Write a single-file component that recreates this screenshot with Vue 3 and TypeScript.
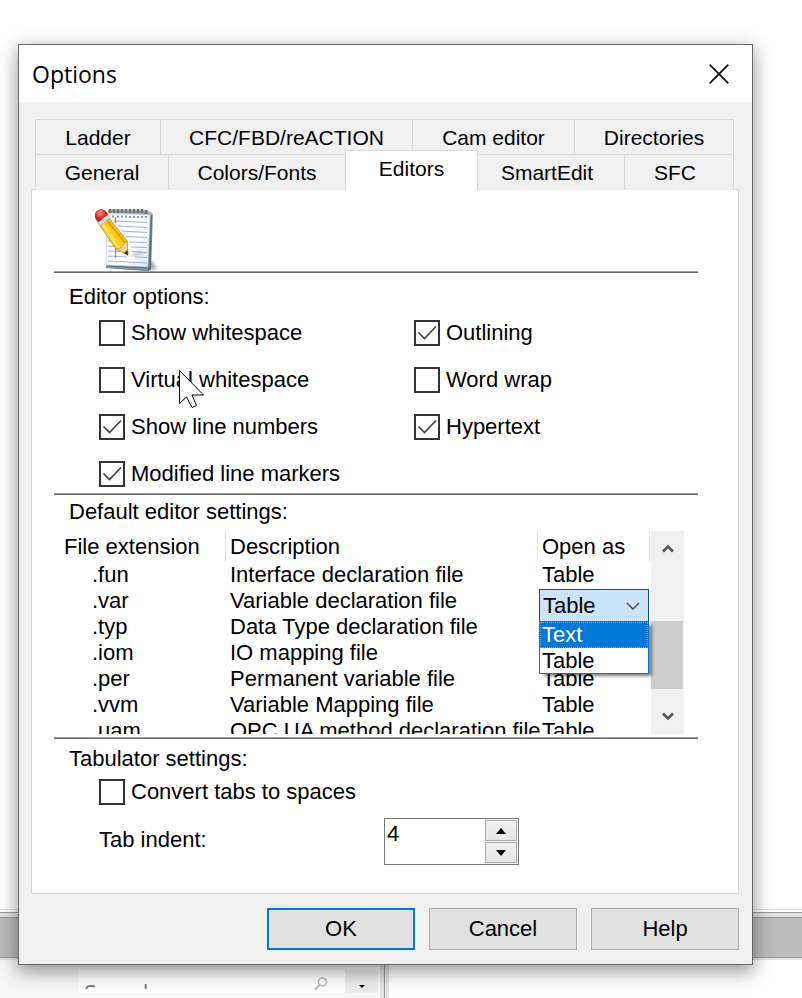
<script setup lang="ts">
import { ref } from 'vue'

interface Option {
  id: string
  label: string
  checked: boolean
}

interface FileType {
  ext: string
  description: string
  openAs: string
}

const upperTabs = ['Ladder', 'CFC/FBD/reACTION', 'Cam editor', 'Directories']
const lowerTabs = ['General', 'Colors/Fonts', 'Editors', 'SmartEdit', 'SFC']
const activeTab = ref('Editors')

const leftOptions = ref<Option[]>([
  { id: 'show-whitespace', label: 'Show whitespace', checked: false },
  { id: 'virtual-whitespace', label: 'Virtual whitespace', checked: false },
  { id: 'line-numbers', label: 'Show line numbers', checked: true },
  { id: 'line-markers', label: 'Modified line markers', checked: true },
])
const rightOptions = ref<Option[]>([
  { id: 'outlining', label: 'Outlining', checked: true },
  { id: 'word-wrap', label: 'Word wrap', checked: false },
  { id: 'hypertext', label: 'Hypertext', checked: true },
])

const fileTypes = ref<FileType[]>([
  { ext: '.fun', description: 'Interface declaration file', openAs: 'Table' },
  { ext: '.var', description: 'Variable declaration file', openAs: 'Table' },
  { ext: '.typ', description: 'Data Type declaration file', openAs: 'Table' },
  { ext: '.iom', description: 'IO mapping file', openAs: 'Table' },
  { ext: '.per', description: 'Permanent variable file', openAs: 'Table' },
  { ext: '.vvm', description: 'Variable Mapping file', openAs: 'Table' },
  { ext: '.uam', description: 'OPC UA method declaration file', openAs: 'Table' },
])
const editing = ref('.var')
const choices = ['Text', 'Table']
const highlighted = ref('Text')

const convertTabs = ref(false)
const tabIndent = ref(4)
</script>

<template>
  <div class="desktop">
    <div class="backdrop">
      <div class="bar"></div>
      <div class="lower">
        <div class="search-pane">
          <div class="search">
            <div class="search-clip">
              <input class="search-input" type="text" placeholder="Search" aria-label="Search" />
            </div>
            <svg class="magnifier" viewBox="0 0 14 14" width="14" height="14">
              <circle cx="8.500" cy="5" r="4" fill="none" stroke="#b4b4b4" stroke-width="1.500" />
              <path d="M5.500 8 1 12.500" stroke="#b4b4b4" stroke-width="2" />
            </svg>
          </div>
          <button class="search-drop" type="button" aria-label="Search options">
            <svg viewBox="0 0 6 3" width="6" height="3"><path d="M0 0H6L3 3Z" /></svg>
          </button>
        </div>
        <div class="splitter"></div>
      </div>
    </div>

    <section class="dialog" role="dialog" aria-labelledby="dialog-title">
      <header class="titlebar">
        <h1 id="dialog-title">Options</h1>
        <button class="close" type="button" aria-label="Close">
          <svg viewBox="0 0 20 20" width="20" height="20">
            <path d="M.7.700 19.300 19.300M19.300.7.700 19.300" stroke="#111" stroke-width="1.800" />
          </svg>
        </button>
      </header>

      <div class="body">
        <div class="tabs" role="tablist">
          <div class="tab-row upper">
            <button v-for="tab in upperTabs" :key="tab" class="tab" type="button" role="tab">{{ tab }}</button>
          </div>
          <div class="tab-row lower-row">
            <button
              v-for="tab in lowerTabs"
              :key="tab"
              class="tab"
              :class="{ active: tab === activeTab }"
              type="button"
              role="tab"
              :aria-selected="tab === activeTab"
            >{{ tab }}</button>
          </div>
        </div>

        <div class="panel" role="tabpanel">
          <svg class="notepad" viewBox="0 0 66 64" width="66" height="64">
            <defs>
              <linearGradient id="paper" x1="0" y1="0" x2="1" y2="1">
                <stop offset="0" stop-color="#eef4fc" />
                <stop offset=".6" stop-color="#ffffff" />
                <stop offset="1" stop-color="#dde6f2" />
              </linearGradient>
              <linearGradient id="cover" x1="0" y1="0" x2="0" y2="1">
                <stop offset="0" stop-color="#a9b4bd" />
                <stop offset="1" stop-color="#566b7c" />
              </linearGradient>
              <linearGradient id="wood" x1="0" y1="1" x2="1" y2="0">
                <stop offset="0" stop-color="#e59a00" />
                <stop offset=".45" stop-color="#ffd21e" />
                <stop offset="1" stop-color="#f0a800" />
              </linearGradient>
              <radialGradient id="rubber" cx=".4" cy=".3" r=".8">
                <stop offset="0" stop-color="#ff8a78" />
                <stop offset=".5" stop-color="#d92a20" />
                <stop offset="1" stop-color="#9c120c" />
              </radialGradient>
              <filter id="soft"><feGaussianBlur stdDeviation="1.500" /></filter>
            </defs>
            <path d="M14 60 57 63 63 61 58 54Z" fill="#777" opacity=".6" filter="url(#soft)" />
            <path d="M14 3 55 4 59 7 57 63 53 64 12 61Z" fill="url(#cover)" />
            <path d="M13 6 56 8 54 60 12 58Z" fill="url(#paper)" stroke="#b7c6d6" stroke-width=".6" />
            <path d="M57.500 8 55.500 62" stroke="#5d7080" stroke-width="1.500" />
            <path d="M12 60 54 62.500" stroke="#8397a8" stroke-width="1.500" />
            <path d="M20 14 53 15.500M24 19 53 20.500M28 24 53 25.500M32 29.500 53 30.500M14 29 16 29M14 34 19 34.500M35 35 53 35.500M14 39 22 39.500M37 40 53 40.500M14 44 26 44.500M38 44.500 53 45.500M14 49 33 50M41 50 53 50.500M14 54 53 56" stroke="#a3b1d6" stroke-width="1.200" />
            <path d="M21.500 10V16M21.500 38V51" stroke="#f0686c" stroke-width="1.300" />
            <path d="M16 2V6M20 2V6M24 2V6M28 2V6M32 2V6M36 2V6M40 2V6M44 2V6M48 2V6M52 3V7" stroke="#6a6e73" stroke-width="2.800" />
            <path d="M19 8.500v2M24 8.500v2M28 8.500v2M32 8.500v2M36 9v2M40 9v2M44 9v2M48 9v2M52 9v2" stroke="#777" stroke-width="1.500" />
            <path d="M35 49 45 44 51 46 43 49Z" fill="#9da6b3" opacity=".6" filter="url(#soft)" />
            <path d="M5 17 14 10 33 34 34 48 22 42Z" fill="url(#wood)" stroke="#b87800" stroke-width=".7" />
            <path d="M8 16 25 42" stroke="#ffe678" stroke-width="2" />
            <path d="M13 13 31 36" stroke="#d79a00" stroke-width="1.500" />
            <path d="M22 42 27 41 29 38 33 34 34 48Z" fill="#f0d6a0" stroke="#b98a45" stroke-width=".6" />
            <path d="M30 46 33.500 43 34 48.500Z" fill="#342c2a" />
            <path d="M3 14 13 7 16 11 6 19Z" fill="#d9dce0" stroke="#8e959b" stroke-width=".6" />
            <path d="M1 10Q0 3 7 2 12 2 14 8 10 10 5 15 2 14 1 10Z" fill="url(#rubber)" />
          </svg>

          <section class="group editor-options">
            <h2>Editor options:</h2>
            <div class="option-columns">
              <div class="option-list">
                <label v-for="o in leftOptions" :key="o.id" class="check" :for="o.id">
                  <input :id="o.id" v-model="o.checked" type="checkbox" />
                  <svg class="tick" viewBox="0 0 26 26" width="26" height="26"><path d="M4.500 12.500 10.500 18.500 22 6.500" /></svg>
                  <span>{{ o.label }}</span>
                </label>
              </div>
              <div class="option-list">
                <label v-for="o in rightOptions" :key="o.id" class="check" :for="o.id">
                  <input :id="o.id" v-model="o.checked" type="checkbox" />
                  <svg class="tick" viewBox="0 0 26 26" width="26" height="26"><path d="M4.500 12.500 10.500 18.500 22 6.500" /></svg>
                  <span>{{ o.label }}</span>
                </label>
              </div>
            </div>
          </section>

          <section class="group defaults">
            <h2>Default editor settings:</h2>
            <div class="list">
              <table>
                <colgroup>
                  <col class="col-ext" />
                  <col />
                  <col class="col-open" />
                </colgroup>
                <thead>
                  <tr>
                    <th scope="col">File extension</th>
                    <th scope="col">Description</th>
                    <th scope="col">Open as</th>
                  </tr>
                </thead>
                <tbody>
                  <tr v-for="f in fileTypes" :key="f.ext">
                    <td class="ext">{{ f.ext }}</td>
                    <td>{{ f.description }}</td>
                    <td v-if="f.ext === editing" class="open-cell">
                      <select v-model="f.openAs" aria-label="Open as">
                        <option v-for="c in choices" :key="c">{{ c }}</option>
                      </select>
                      <svg class="chevron" viewBox="0 0 14 8" width="14" height="8"><path d="M1 1 7 7 13 1" /></svg>
                      <ul class="menu" role="listbox" aria-label="Open as choices">
                        <li
                          v-for="c in choices"
                          :key="c"
                          role="option"
                          :class="{ selected: c === highlighted }"
                          :aria-selected="c === highlighted"
                        >{{ c }}</li>
                      </ul>
                    </td>
                    <td v-else>{{ f.openAs }}</td>
                  </tr>
                </tbody>
              </table>
              <div class="scrollbar">
                <button type="button" aria-label="Scroll up">
                  <svg viewBox="0 0 12 9" width="12" height="9"><path d="M1 7.500 6 2.500 11 7.500" /></svg>
                </button>
                <div class="track"><div class="thumb"></div></div>
                <button type="button" aria-label="Scroll down">
                  <svg viewBox="0 0 12 9" width="12" height="9"><path d="M1 1.500 6 6.500 11 1.500" /></svg>
                </button>
              </div>
            </div>
          </section>

          <section class="group tabulator">
            <h2>Tabulator settings:</h2>
            <label class="check" for="convert-tabs">
              <input id="convert-tabs" v-model="convertTabs" type="checkbox" />
              <svg class="tick" viewBox="0 0 26 26" width="26" height="26"><path d="M4.500 12.500 10.500 18.500 22 6.500" /></svg>
              <span>Convert tabs to spaces</span>
            </label>
            <div class="indent-row">
              <label for="tab-indent">Tab indent:</label>
              <div class="spinner">
                <input id="tab-indent" v-model="tabIndent" type="text" />
                <div class="spin-buttons">
                  <button type="button" aria-label="Increase" @click="tabIndent++">
                    <svg viewBox="0 0 10 6" width="10" height="6"><path d="M0 6 5 0 10 6Z" /></svg>
                  </button>
                  <button type="button" aria-label="Decrease" @click="tabIndent--">
                    <svg viewBox="0 0 10 6" width="10" height="6"><path d="M0 0 5 6 10 0Z" /></svg>
                  </button>
                </div>
              </div>
            </div>
          </section>
        </div>

        <footer class="actions">
          <button class="default" type="button">OK</button>
          <button type="button">Cancel</button>
          <button type="button">Help</button>
        </footer>
      </div>
    </section>

    <svg class="pointer" viewBox="0 0 26 39" width="26" height="39">
      <path d="M.5.500V33.500L7.500 27 13 37.500 17.500 35.500 13 25H24.500Z" fill="#fff" stroke="#000" />
    </svg>
  </div>
</template>

<style>
body {
  background: #fff;
}
</style>

<style scoped>
* {
  box-sizing: border-box;
}

.desktop {
  position: relative;
  min-height: 100vh;
  padding: 44px 49px 33px 18px;
  overflow: hidden;
  font: 22px/26px "Liberation Sans", Arial, sans-serif;
  color: #000;
}

button,
input,
select {
  margin: 0;
  padding: 0;
  border: 0;
  border-radius: 0;
  font: inherit;
  color: inherit;
  appearance: none;
}

svg {
  display: block;
}

/* Application window behind the dialog */
.backdrop {
  position: absolute;
  inset: auto 0 0 0;
  height: 89px;
  display: flex;
  flex-direction: column;
  border-top: 1px solid #e2e2e2;
}

.bar {
  flex: none;
  height: 46px;
  margin-top: 2px;
  border-top: 1px solid #999;
  border-bottom: 1px solid #999;
  background: linear-gradient(#e3e3e3 4px, #999 4px, #999 5px, #bcbcbc 5px);
}

.lower {
  flex: 1;
  display: flex;
  border-top: 2px solid #e3e3e3;
}

.search-pane {
  flex: none;
  width: 380px;
  display: flex;
  align-items: flex-start;
  padding: 10px 2px 0 79px;
  background: #f7f7f7;
}

.search {
  flex: 1;
  height: 23px;
  display: flex;
  background: #fff;
}

.search-clip {
  flex: 1;
  height: 19px;
  overflow: hidden;
}

.search-input {
  width: 100%;
  height: 30px;
  margin-top: 8px;
  padding-left: 5px;
  background: transparent;
  font: 23px/30px "Open Sans", "Noto Sans", sans-serif;
}

.search-input::placeholder {
  color: #777;
  opacity: 1;
}

.magnifier {
  margin: 7px 17px 0 0;
}

.search-drop {
  width: 33px;
  height: 23px;
  display: flex;
  justify-content: center;
  padding-top: 15px;
  background: #ececec;
}

.splitter {
  width: 9px;
  border-right: 4px solid #e3e3e3;
  background: linear-gradient(90deg, #e3e3e3 4px, #999 4px);
}

/* Dialog frame */
.dialog {
  position: relative;
  border: 1px solid #666;
  background: #f0f0f0;
  box-shadow: 0 6px 18px 1px rgba(0, 0, 0, 0.4);
}

.titlebar {
  display: flex;
  align-items: center;
  justify-content: space-between;
  height: 57px;
  padding: 0 23px 0 13px;
  background: #fff;
}

h1 {
  margin: 0;
  font: 23px/30px "Open Sans", "Noto Sans", sans-serif;
}

.close {
  background: transparent;
}

.body {
  padding: 17px 13px 14px 12px;
}

/* Tabs */
.tabs {
  padding: 0 5px 0 4px;
}

.tab-row {
  display: grid;
  height: 35px;
}

.upper {
  grid-template-columns: 125fr 252fr 162fr 160fr;
}

.lower-row {
  grid-template-columns: 133fr 177fr 133fr 146fr 110fr;
}

.tab {
  padding-top: 1px;
  border: 1px solid #d9d9d9;
  border-width: 1px 0 0 1px;
  background: #f0f0f0;
  font-size: 21px;
  white-space: nowrap;
}

.tab:last-child {
  border-right-width: 1px;
}

.tab.active {
  position: relative;
  height: 40px;
  margin-top: -4px;
  padding-bottom: 4px;
  border-right-width: 1px;
  background: #fff;
}

.tab.active ~ .tab {
  padding-right: 8px;
}

.tab.active + .tab {
  border-left-width: 0;
}

/* Tab page */
.panel {
  padding: 17px 40px 28px 22px;
  border: 1px solid #d9d9d9;
  background: #fff;
}

.notepad {
  margin-left: 40px;
}

.group {
  border-top: 1px solid #a0a0a0;
  box-shadow: inset 0 1px #696969;
}

h2 {
  margin: 0;
  padding-left: 15px;
  font: inherit;
}

.editor-options {
  padding: 12px 0 6px;
}

.option-columns {
  display: grid;
  grid-template-columns: 315fr 284fr;
  padding: 10px 0 0 45px;
}

.option-list {
  display: flex;
  flex-direction: column;
  gap: 21px;
}

.check {
  position: relative;
  display: flex;
  align-items: center;
  gap: 6px;
  height: 26px;
}

.check input {
  width: 26px;
  height: 26px;
  border: 2px solid #333;
  background: #fff;
}

.tick {
  position: absolute;
  left: 0;
  top: 0;
  visibility: hidden;
  pointer-events: none;
}

.tick path {
  fill: none;
  stroke: #444;
  stroke-width: 1.7;
}

.check input:checked + .tick {
  visibility: visible;
}

.defaults {
  padding: 5px 0 3px;
}

.list {
  display: grid;
  grid-template-columns: minmax(0, 1fr) 33px;
  align-items: start;
  gap: 1px;
  height: 203px;
  margin: 6px 14px 0 5px;
  overflow: hidden;
}

table {
  width: 100%;
  table-layout: fixed;
  border-collapse: separate;
  border-spacing: 0;
}

.col-ext {
  width: 167px;
}

.col-open {
  width: 112px;
}

th {
  height: 31px;
  padding: 0 0 0 4px;
  border-right: 1px solid #e5e5e5;
  font-weight: normal;
  text-align: left;
}

th:first-child {
  padding-left: 5px;
}

td {
  height: 26px;
  padding: 0 0 0 4px;
  white-space: nowrap;
}

.ext {
  padding-left: 33px;
}

.open-cell {
  position: relative;
}

.open-cell select {
  position: absolute;
  left: 1px;
  top: 1px;
  width: 110px;
  height: 33px;
  padding-left: 3px;
  border: 1px solid #005499;
  background: #cce4f7;
}

.chevron {
  position: absolute;
  right: 10px;
  top: 14px;
  pointer-events: none;
}

.chevron path {
  fill: none;
  stroke: #444;
  stroke-width: 1.4;
}

.menu {
  position: absolute;
  z-index: 1;
  left: 1px;
  top: 33px;
  width: 110px;
  margin: 0;
  padding: 0;
  border: 1px solid #0078d7;
  background: #fff;
  box-shadow: 4px 3px 3px -1px rgba(0, 0, 0, 0.5);
  list-style: none;
}

.menu li {
  height: 25px;
  padding-left: 2px;
}

.menu .selected {
  height: 26px;
  background: #0078d7;
  outline: 1px dotted #ff8728;
  outline-offset: -1px;
  color: #fff;
}

.scrollbar {
  display: flex;
  flex-direction: column;
  height: 203px;
  background: #f0f0f0;
}

.scrollbar button {
  display: flex;
  align-items: center;
  justify-content: center;
  height: 35px;
  background: transparent;
}

.scrollbar path {
  fill: none;
  stroke: #555;
  stroke-width: 2.6;
}

.track {
  flex: 1;
  display: flex;
  flex-direction: column;
  justify-content: flex-end;
  padding: 0 1px 10px 0;
}

.thumb {
  height: 68px;
  background: #cdcdcd;
}

.tabulator {
  padding-top: 8px;
}

.tabulator .check {
  margin: 7px 0 13px 45px;
}

.indent-row {
  display: grid;
  grid-template-columns: 285fr 314fr;
  align-items: center;
  padding-left: 45px;
}

.indent-row label {
  padding-bottom: 4px;
}

.spinner {
  display: flex;
  width: 135px;
  height: 47px;
  border: 1px solid #7a7a7a;
}

.spinner input {
  flex: 1;
  min-width: 0;
  padding: 0 0 16px 2px;
}

.spin-buttons {
  display: flex;
  flex-direction: column;
  gap: 1px;
  width: 33px;
  padding: 1px 1px 1px 0;
  background: #f4f4f8;
}

.spin-buttons button {
  flex: 1;
  display: flex;
  align-items: center;
  justify-content: center;
  border: 1px solid #acacac;
  background: linear-gradient(#f0f0f0, #e5e5e5);
}

/* Dialog buttons */
.actions {
  display: flex;
  justify-content: flex-end;
  gap: 14px;
  padding-top: 14px;
}

.actions button {
  width: 148px;
  height: 42px;
  border: 1px solid #adadad;
  background: #e1e1e1;
}

.actions .default {
  border: 2px solid #0078d7;
}

.pointer {
  position: absolute;
  left: 179px;
  top: 370px;
  pointer-events: none;
}
</style>
